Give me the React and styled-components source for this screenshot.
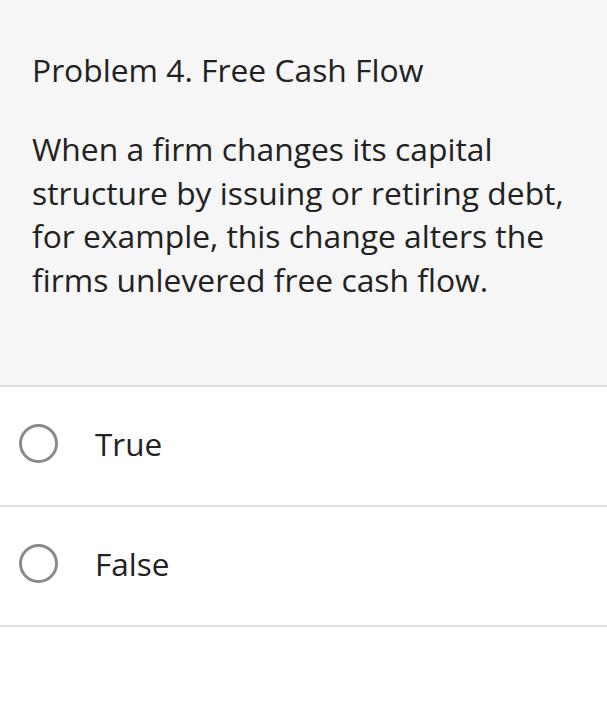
import React from 'react';
import styled, { createGlobalStyle } from 'styled-components';

const GlobalStyle = createGlobalStyle`
  html, body {
    margin: 0;
    padding: 0;
    background: #ffffff;
    font-family: "Open Sans", "Liberation Sans", sans-serif;
  }
`;

const options = ['True', 'False'];

function App() {
  return (
    <>
      <GlobalStyle />
      <Page>
        <Question>
          <Title>Problem 4. Free Cash Flow</Title>
          <Body>
            When a firm changes its capital structure by issuing or retiring debt,
            for example, this change alters the firms unlevered free cash flow.
          </Body>
        </Question>
        <Options>
          {options.map((opt) => (
            <Option key={opt}>
              <Radio />
              <Label>{opt}</Label>
            </Option>
          ))}
        </Options>
      </Page>
    </>
  );
}

const Page = styled.div`
  width: 607px;
  min-height: 707px;
  background: #ffffff;
`;

const Question = styled.div`
  background: #f6f6f6;
  height: 385px;
  box-sizing: border-box;
  padding: 48px 20px 0 32px;
  color: #222;
`;

const Title = styled.div`
  font-size: 31.8px;
  line-height: 44px;
  margin-bottom: 35px;
`;

const Body = styled.div`
  font-size: 31.8px;
  line-height: 43.5px;
`;

const Options = styled.div`
  border-top: 2px solid #e0e0e0;
`;

const Option = styled.label`
  display: flex;
  align-items: center;
  height: 112px;
  padding: 0 0 6px 19px;
  border-bottom: 2px solid #e0e0e0;
`;

const Radio = styled.span`
  width: 33px;
  height: 33px;
  border: 3.5px solid #8a8a8a;
  border-radius: 50%;
  flex-shrink: 0;
`;

const Label = styled.span`
  margin-left: 37px;
  font-size: 31.5px;
  color: #222;
`;

export default App;
